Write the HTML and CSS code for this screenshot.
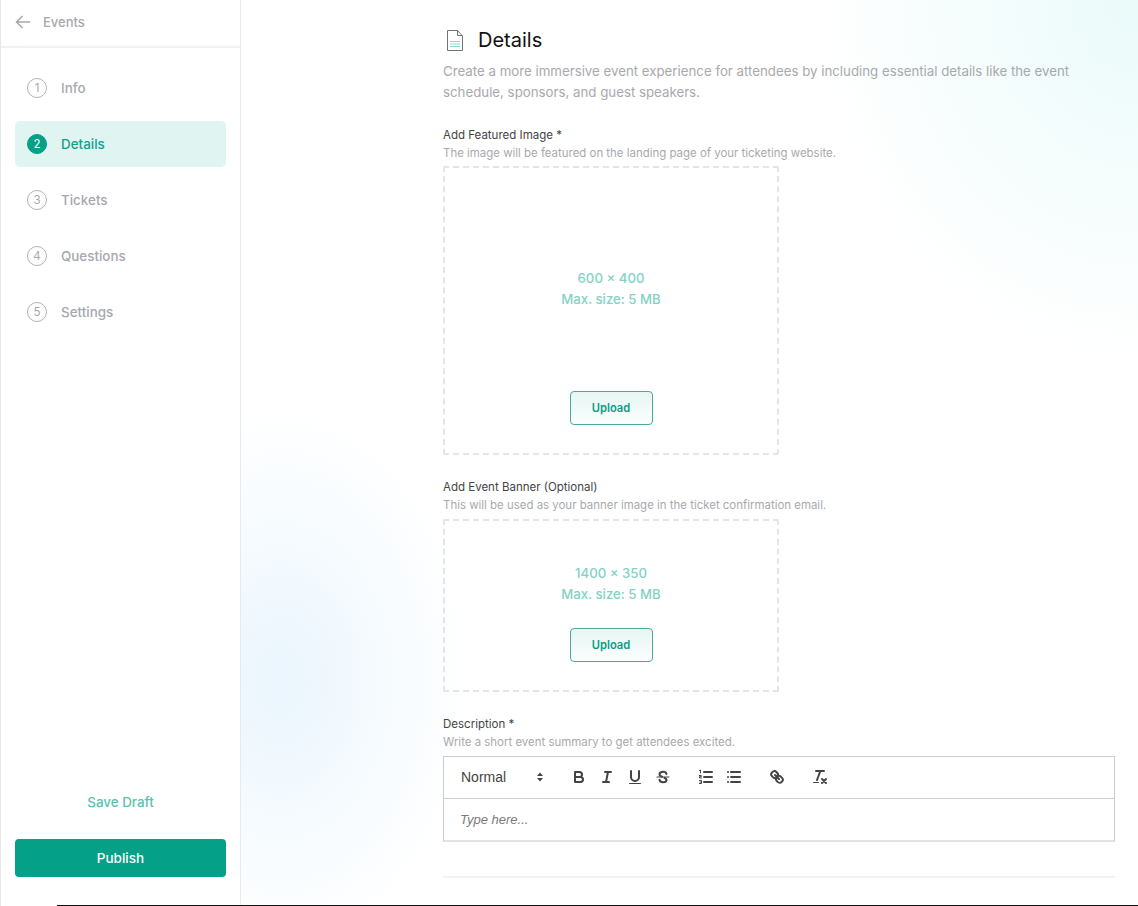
FILE: index.html
```html
<!DOCTYPE html>
<html lang="en">
<head>
    <meta charset="UTF-8">
    <meta name="viewport" content="width=device-width, initial-scale=1.0">
    <title>Event Details</title>
    <link rel="stylesheet" href="styles.css">
</head>
<body>
    <div class="page">
        <aside class="sidebar">
            <div class="back-row">
                <svg class="back-icon" width="16" height="14" viewBox="0 0 16 14"><path d="M15 7H1.500M7.500 1 1.500 7l6 6"/></svg>
                <span>Events</span>
            </div>

            <nav class="steps">
                <a class="step"><span class="step-num">1</span>Info</a>
                <a class="step active"><span class="step-num">2</span>Details</a>
                <a class="step"><span class="step-num">3</span>Tickets</a>
                <a class="step"><span class="step-num">4</span>Questions</a>
                <a class="step"><span class="step-num">5</span>Settings</a>
            </nav>

            <div class="side-actions">
                <button class="save-draft">Save Draft</button>
                <button class="publish">Publish</button>
            </div>
        </aside>

        <main class="main">
            <div class="content">
                <div class="title-row">
                    <svg class="doc-icon" width="18" height="21" viewBox="0 0 18 21">
                        <path class="doc-fill" d="M1.500.5h10l5 5v15h-15z"/>
                        <path class="doc-lines" d="M4 11.500h10M4 14h10M4 16.500h10"/>
                        <path class="doc-edge" d="M16.500 6v14.500h-15V.5h10zM11.500.5v5h5"/>
                    </svg>
                    <h1>Details</h1>
                </div>
                <p class="intro">Create a more immersive event experience for attendees by including essential details like the event schedule, sponsors, and guest speakers.</p>

                <div class="field">
                    <label>Add Featured Image *</label>
                    <p class="hint">The image will be featured on the landing page of your ticketing website.</p>
                    <div class="dropzone dropzone-tall">
                        <div class="drop-text">600 × 400<br>Max. size: 5 MB</div>
                        <button class="upload">Upload</button>
                    </div>
                </div>

                <div class="field">
                    <label>Add Event Banner (Optional)</label>
                    <p class="hint">This will be used as your banner image in the ticket confirmation email.</p>
                    <div class="dropzone dropzone-short">
                        <div class="drop-text">1400 × 350<br>Max. size: 5 MB</div>
                        <button class="upload">Upload</button>
                    </div>
                </div>

                <div class="field">
                    <label>Description *</label>
                    <p class="hint">Write a short event summary to get attendees excited.</p>
                    <div class="editor">
                        <div class="toolbar">
                            <span class="picker">Normal
                                <svg width="18" height="18" viewBox="0 0 18 18"><path class="solid" d="M5 8 8 4.500 11 8zM5 10l3 3.500 3-3.500z"/></svg>
                            </span>
                            <span class="tool-group">
                                <button class="tool"><svg width="18" height="18" viewBox="0 0 18 18"><path d="M5 4h4.500a2.500 2.500 0 0 1 0 5H5zM5 9h5.500a2.500 2.500 0 0 1 0 5H5z"/></svg></button>
                                <button class="tool"><svg width="18" height="18" viewBox="0 0 18 18"><path d="M7 4h6M5 14h6M8 14l2-10"/></svg></button>
                                <button class="tool"><svg width="18" height="18" viewBox="0 0 18 18"><path d="M5 3v6a4 4 0 0 0 4 4 4 4 0 0 0 4-4V3"/><rect class="solid" x="3" y="15" width="12" height="1" rx=".5"/></svg></button>
                                <button class="tool"><svg width="18" height="18" viewBox="0 0 18 18"><path class="thin" d="M3 9h12"/><path d="M12.500 6C12.200 4.500 10.800 3.700 9 3.700 7 3.700 5.500 4.700 5.500 6.300 5.500 7.500 6.500 8.300 8 8.800M10.500 10C12 10.500 12.500 11 12.500 11.700c0 1.600-1.500 2.600-3.500 2.600-1.800 0-3.200-.9-3.500-2.500"/></svg></button>
                            </span>
                            <span class="tool-group">
                                <button class="tool"><svg width="18" height="18" viewBox="0 0 18 18"><path d="M7 4h8M7 9h8M7 14h8"/><path class="thin" d="M2.500 2.500 3.500 2v3M2.500 7.500h1.800v1.200H2.500v1.300h2M2.500 12.500h2v3h-2M3 14h1.500"/></svg></button>
                                <button class="tool"><svg width="18" height="18" viewBox="0 0 18 18"><path d="M6 4h9M6 9h9M6 14h9M3 4h.01M3 9h.01M3 14h.01"/></svg></button>
                            </span>
                            <span class="tool-group">
                                <button class="tool"><svg width="18" height="18" viewBox="0 0 18 18"><path d="M7 7l4 4M8.900 4.600a3.500 3.500 0 0 1 .4 4.700 3.500 3.500 0 0 1-4.700-.4C3.200 7.500 2 6.400 4.200 4.200s3.300-1 4.700.4zM13.400 9.100a3.500 3.500 0 0 0-4.700-.4 3.500 3.500 0 0 0 .4 4.700c1.400 1.400 2.500 2.500 4.700.4s1-3.300-.4-4.700z"/></svg></button>
                            </span>
                            <span class="tool-group">
                                <button class="tool"><svg width="18" height="18" viewBox="0 0 18 18"><path d="M5 3h8M6 12 9.350 3M11 11l4 4M15 11l-4 4"/><rect class="solid" x="2" y="14" width="6" height="1" rx=".5"/></svg></button>
                            </span>
                        </div>
                        <div class="editor-body">Type here...</div>
                    </div>
                </div>

                <hr class="divider">
            </div>
        </main>
    </div>
</body>
</html>
```

FILE: styles.css
```css
* {
    box-sizing: border-box;
}
html, body {
    margin: 0;
    height: 100%;
}
body {
    position: relative;
    overflow: hidden;
    font-family: Inter, "Open Sans", sans-serif;
    background: #fff;
}
/* black strip along the bottom edge */
body::after {
    content: "";
    position: absolute;
    left: 57px;
    right: 0;
    bottom: 0;
    height: 1px;
    background: #111;
}
button {
    font-family: inherit;
    cursor: pointer;
}
.page {
    display: flex;
    height: 906px;
}

/* sidebar */
.sidebar {
    width: 241px;
    flex-shrink: 0;
    display: flex;
    flex-direction: column;
    background: #fff;
    border-left: 1px solid #e1e8f0;
    border-right: 1px solid #e6ebf2;
}
.back-row {
    height: 48px;
    display: flex;
    align-items: center;
    gap: 12px;
    padding: 0 0 2px 14px;
    border-bottom: 2px solid #eff2f6;
    font-size: 13px;
    font-weight: 500;
    color: #a6a8ae;
}
.back-icon path {
    fill: none;
    stroke: #a6a8ae;
    stroke-width: 1.5;
}
.steps {
    display: flex;
    flex-direction: column;
    gap: 10px;
    padding: 17px 14px 0;
}
.step {
    height: 46px;
    display: flex;
    align-items: center;
    gap: 14px;
    padding: 0 0 1px 12px;
    border-radius: 5px;
    font-size: 13.4px;
    font-weight: 500;
    color: #a6a8ae;
}
.step-num {
    width: 20px;
    height: 20px;
    display: flex;
    align-items: center;
    justify-content: center;
    border: 1.5px solid #b0b2b8;
    border-radius: 50%;
    font-size: 11.500px;
    font-weight: 400;
}
.step.active {
    background: #e0f4f1;
    color: #0fa28b;
}
.step.active .step-num {
    background: #04a088;
    border-color: #04a088;
    color: #fff;
}
.side-actions {
    margin-top: auto;
    padding: 0 14px 29px;
    display: flex;
    flex-direction: column;
    gap: 28px;
}
.save-draft {
    border: none;
    background: none;
    padding: 0;
    height: 18px;
    font-size: 13.4px;
    font-weight: 500;
    color: #5cc0b0;
}
.publish {
    height: 38px;
    border: none;
    border-radius: 4px;
    background: #04a088;
    color: #fff;
    font-size: 13.5px;
    font-weight: 500;
}

/* main column */
.main {
    flex: 1;
    padding-left: 202px;
    background:
        radial-gradient(ellipse 320px 360px at 100% 0, rgba(214, 246, 245, 0.5), rgba(214, 246, 245, 0) 100%),
        radial-gradient(ellipse 190px 270px at 40px 680px, rgba(214, 236, 252, 0.5), rgba(214, 236, 252, 0) 100%);
}
.content {
    width: 672px;
    padding-top: 28px;
}
.title-row {
    display: flex;
    align-items: center;
    gap: 14px;
    height: 24px;
    padding-left: 3px;
}
h1 {
    margin: 0;
    font-size: 20px;
    font-weight: 400;
    color: #111;
}
.doc-icon .doc-fill {
    fill: #fff;
}
.doc-icon .doc-lines {
    fill: none;
    stroke: #8fd8cc;
}
.doc-icon .doc-edge {
    fill: none;
    stroke: #6d7480;
}
.intro {
    margin: 9px 0 0;
    font-size: 13.28px;
    line-height: 21px;
    color: #a8a9ad;
}
.field {
    margin-top: 25px;
}
label {
    display: block;
    font-size: 11.5px;
    line-height: 15px;
    color: #444;
}
.hint {
    margin: 3px 0 6px;
    font-size: 11.44px;
    line-height: 14px;
    color: #a8a9ad;
}
.field + .field .hint {
    margin-bottom: 7px;
}
.dropzone {
    width: 336px;
    display: flex;
    flex-direction: column;
    align-items: center;
    padding-bottom: 28px;
    border: 2px dashed #e3e5ea;
    border-radius: 2px;
}
.dropzone-tall {
    height: 289px;
    padding-top: 100px;
}
.dropzone-short {
    height: 173px;
    padding-top: 42px;
}
.drop-text {
    font-size: 13.2px;
    font-weight: 500;
    line-height: 21px;
    text-align: center;
    color: #84d2c6;
}
.upload {
    margin-top: auto;
    width: 83px;
    height: 34px;
    border: 1px solid #4aa99b;
    border-radius: 4px;
    background: linear-gradient(#e6f6f3, #fbfefd);
    color: #0b9c85;
    font-size: 11.2px;
    font-weight: 600;
}

/* text editor */
.editor {
    border: 1px solid #ccc;
    border-bottom: 2px solid #e2e2e2;
    background: #fff;
    font-family: "Liberation Sans", Arial, sans-serif;
}
.toolbar {
    height: 42px;
    display: flex;
    align-items: center;
    padding: 0 8px 2px;
    border-bottom: 1px solid #ccc;
}
.picker {
    width: 98px;
    display: flex;
    align-items: center;
    justify-content: space-between;
    padding-left: 9px;
    font-size: 14px;
    color: #444;
}
.tool-group {
    display: flex;
    margin-left: 15px;
}
.tool {
    width: 28px;
    height: 24px;
    padding: 3px 5px;
    border: none;
    background: none;
}
.toolbar svg {
    display: block;
}
.toolbar svg path {
    fill: none;
    stroke: #444;
    stroke-width: 2;
    stroke-linecap: round;
    stroke-linejoin: round;
}
.toolbar svg path.thin {
    stroke-width: 1;
}
.toolbar svg .solid,
.toolbar svg path.solid {
    fill: #444;
    stroke: none;
}
.editor-body {
    height: 41px;
    padding: 0 16px;
    display: flex;
    align-items: center;
    font-size: 13px;
    font-style: italic;
    color: #7a7a7a;
}
.divider {
    margin: 34px 0 0;
    border: none;
    border-top: 2px solid #f0f2f6;
}
```
